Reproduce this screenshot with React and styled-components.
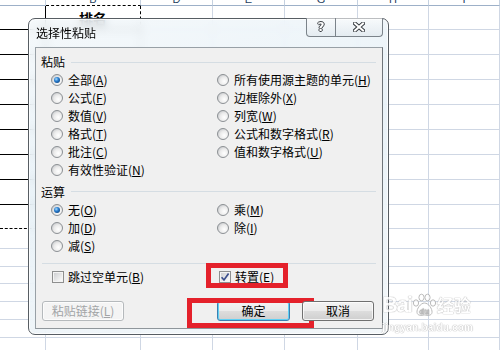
import styled, { createGlobalStyle } from "styled-components";

const GlobalStyle = createGlobalStyle`
  html, body { margin: 0; padding: 0; background: #fff; }
  body { font-family: "Noto Sans CJK SC", "Liberation Sans", sans-serif; }
`;

const GRID = "#cfd7e4";
const colWidths = [46, 95, 72, 72, 73, 71, 71];
const headers = ["", "B", "D", "E", "G", "H", "I"];
const rowHeights = [24, 25, 25, 25, 25, 25, 25, 25, 24, 20, 18, 17, 18, 18, 18, 18];

const pasteOptions = [
  { label: "全部", key: "A", checked: true },
  { label: "所有使用源主题的单元", key: "H" },
  { label: "公式", key: "F" },
  { label: "边框除外", key: "X" },
  { label: "数值", key: "V" },
  { label: "列宽", key: "W" },
  { label: "格式", key: "T" },
  { label: "公式和数字格式", key: "R" },
  { label: "批注", key: "C" },
  { label: "值和数字格式", key: "U" },
  { label: "有效性验证", key: "N" },
];

const opOptions = [
  { label: "无", key: "O", checked: true },
  { label: "乘", key: "M" },
  { label: "加", key: "D" },
  { label: "除", key: "I" },
  { label: "减", key: "S" },
];

const Page = styled.div`
  position: relative;
  width: 500px;
  height: 350px;
  overflow: hidden;
  background: #fff;
`;

const Sheet = styled.div`
  display: flex;
  flex-direction: column;
`;

const Row = styled.div`
  display: flex;
  flex: none;
  height: ${(p) => p.$h}px;
`;

const HeaderCell = styled.div`
  box-sizing: border-box;
  flex: none;
  width: ${(p) => p.$w}px;
  height: 100%;
  overflow: hidden;
  display: flex;
  align-items: flex-end;
  justify-content: center;
  border-right: 1px solid #c5d1e0;
  border-bottom: 1px ${(p) => p.$bottom || "solid #9db0c8"};
  font: 11px/11px "Liberation Sans", sans-serif;
  color: #27415f;
`;

const Cell = styled.div`
  box-sizing: border-box;
  flex: none;
  width: ${(p) => p.$w}px;
  height: 100%;
  display: flex;
  align-items: center;
  justify-content: center;
  border-right: 1px ${(p) => p.$right || `solid ${GRID}`};
  border-bottom: 1px ${(p) => p.$bottom || `solid ${GRID}`};
  font: bold 14px "Noto Sans CJK SC", sans-serif;
  color: #000;
`;

const Dialog = styled.div`
  position: absolute;
  left: 28px;
  top: 18px;
  width: 361px;
  height: 317px;
  box-sizing: border-box;
  padding: 0 5px 5px 6px;
  display: flex;
  flex-direction: column;
  border: 1px solid #575d63;
  border-radius: 7px;
  background: linear-gradient(
    165deg,
    rgba(242, 247, 250, 0.8),
    rgba(228, 239, 246, 0.8) 45%,
    rgba(240, 245, 248, 0.84)
  );
  backdrop-filter: blur(4px);
  box-shadow: inset 0 0 0 1px rgba(255, 255, 255, 0.75);
`;

const TitleBar = styled.div`
  flex: none;
  height: 28px;
  display: flex;
  align-items: flex-start;
  justify-content: space-between;
`;

const Title = styled.span`
  margin-left: 1px;
  font-size: 12px;
  line-height: 28px;
  color: #000;
`;

const Captions = styled.div`
  display: flex;
  margin-top: -1px;
  height: 19px;
  box-sizing: border-box;
  border: 1px solid #7b838a;
  border-top: none;
  border-radius: 0 0 4px 4px;
  overflow: hidden;
  background: linear-gradient(rgba(255, 255, 255, 0.6), rgba(222, 230, 236, 0.6));
`;

const CaptionBtn = styled.div`
  width: ${(p) => p.$w}px;
  display: flex;
  align-items: center;
  justify-content: center;
  & + & {
    border-left: 1px solid #7b838a;
  }
`;

const HelpGlyph = styled.span`
  font: bold 12px/12px "DejaVu Sans", sans-serif;
  color: #fff;
  text-shadow: 1px 0 #3a3f44, -1px 0 #3a3f44, 0 1px #3a3f44, 0 -1px #3a3f44;
`;

const Client = styled.div`
  flex: 1;
  box-sizing: border-box;
  display: flex;
  flex-direction: column;
  padding: 5px 6px 7px 5px;
  background: #f0f0f0;
  border: 1px solid;
  border-color: #98a0a6 #6f757a #8f969b #98a0a6;
  font-size: 12px;
  color: #000;
`;

const GroupHeader = styled.div`
  display: flex;
  align-items: center;
  height: ${(p) => p.$h || 18}px;
  margin-top: ${(p) => p.$mt || 0}px;
  flex: none;
  line-height: 18px;
`;

const GroupLine = styled.div`
  flex: 1;
  height: 1px;
  margin-left: 6px;
  background: #d5dde3;
`;

const OptionGrid = styled.div`
  display: grid;
  grid-template-columns: 166px 1fr;
  grid-auto-rows: 18px;
  margin-left: 10px;
`;

const Option = styled.label`
  display: flex;
  align-items: center;
  gap: 5px;
  white-space: nowrap;
  line-height: 18px;
`;

const Separator = styled.div`
  flex: none;
  height: 1px;
  margin: 8px 0 0 1px;
  background: #d5dde3;
`;

const CheckRow = styled.div`
  display: grid;
  grid-template-columns: 167px 1fr;
  height: 18px;
  margin: 4px 0 0 11px;
`;

const CheckItem = styled.label`
  position: relative;
  display: flex;
  align-items: center;
  gap: 4px;
  white-space: nowrap;
  line-height: 18px;
`;

const ButtonRow = styled.div`
  display: flex;
  height: 20px;
  margin-top: 15px;
  padding-left: 1px;
`;

const ButtonSlot = styled.div`
  position: relative;
  margin-left: ${(p) => p.$ml || "0"};
  margin-right: ${(p) => p.$mr || 0}px;
`;

const Button = styled.button`
  box-sizing: border-box;
  display: block;
  width: ${(p) => p.$w}px;
  height: 20px;
  padding: 0;
  margin: 0;
  font: 12px/18px "Noto Sans CJK SC", sans-serif;
  color: ${(p) => (p.disabled ? "#a2a4a6" : "#000")};
  border: 1px solid
    ${(p) => (p.$primary ? "#3c7fb1" : p.disabled ? "#b5b9bc" : "#707070")};
  border-radius: 3px;
  background: ${(p) =>
    p.disabled
      ? "#f4f4f4"
      : "linear-gradient(#f3f3f3 0%, #ebebeb 48%, #dddddd 50%, #cfcfcf 100%)"};
  box-shadow: inset 0 0 0 1px
    ${(p) => (p.$primary ? "#5fd0f4" : "rgba(255,255,255,0.75)")};
`;

const Highlight = styled.div`
  position: absolute;
  left: ${(p) => p.$l}px;
  top: ${(p) => p.$t}px;
  width: ${(p) => p.$w}px;
  height: ${(p) => p.$h}px;
  box-sizing: border-box;
  border: 5px solid #e4212b;
  pointer-events: none;
`;

const Watermark = styled.div`
  position: absolute;
  left: 382px;
  top: 291px;
  display: flex;
  flex-direction: column;
  pointer-events: none;
  color: #fff;
  text-shadow: 0 0 1px #9c9c9c, 0 0 1px #9c9c9c;
  opacity: 0.8;
`;

const MarkTop = styled.div`
  display: flex;
  align-items: center;
  height: 28px;
`;

const MarkBai = styled.span`
  font: bold 22px/28px "Liberation Sans", sans-serif;
  letter-spacing: -1.5px;
`;

const MarkJy = styled.span`
  font: bold 17px/28px "Noto Sans CJK SC", sans-serif;
`;

const MarkUrl = styled.span`
  margin-top: 3px;
  font: bold 10px/12px "Liberation Sans", sans-serif;
  letter-spacing: 0.2px;
`;

const SvgDefs = () => (
  <svg width="0" height="0" style={{ position: "absolute" }}>
    <defs>
      <radialGradient id="radioFill" cx="62%" cy="62%" r="70%">
        <stop offset="0" stopColor="#ffffff" />
        <stop offset="0.55" stopColor="#ebebeb" />
        <stop offset="1" stopColor="#c4c6c9" />
      </radialGradient>
      <radialGradient id="radioDot" cx="38%" cy="35%" r="70%">
        <stop offset="0" stopColor="#a8dcfd" />
        <stop offset="0.5" stopColor="#2b7fd0" />
        <stop offset="1" stopColor="#0e4a8c" />
      </radialGradient>
      <linearGradient id="checkFill" x1="0" y1="0" x2="1" y2="1">
        <stop offset="0" stopColor="#cfd0d2" />
        <stop offset="1" stopColor="#fbfbfb" />
      </linearGradient>
    </defs>
  </svg>
);

const RadioIcon = ({ checked }) => (
  <svg width="12" height="12" viewBox="0 0 12 12">
    <circle cx="6" cy="6" r="5.5" fill="url(#radioFill)" stroke="#8c9094" />
    {checked && <circle cx="6" cy="6" r="3" fill="url(#radioDot)" />}
  </svg>
);

const CheckIcon = ({ checked }) => (
  <svg width="12" height="12" viewBox="0 0 12 12">
    <rect x="0.5" y="0.5" width="11" height="11" fill="#f4f4f4" stroke="#8e8f8f" />
    <rect x="2" y="2" width="8" height="8" fill="url(#checkFill)" />
    {checked && (
      <path d="M2.6 6.2 L5 9 L9.6 2.6" fill="none" stroke="#3b4f8c" strokeWidth="1.7" />
    )}
  </svg>
);

const CloseIcon = () => (
  <svg width="12" height="10" viewBox="0 0 12 10">
    <path d="M2 1.5 L10 8.5 M10 1.5 L2 8.5" stroke="#3a3f44" strokeWidth="4" strokeLinecap="square" />
    <path d="M2 1.5 L10 8.5 M10 1.5 L2 8.5" stroke="#fff" strokeWidth="2" strokeLinecap="square" />
  </svg>
);

const PawIcon = () => (
  <svg width="25" height="24" viewBox="0 0 25 24">
    <g fill="#fff" stroke="#a9a9a9" strokeWidth="1">
      <ellipse cx="4" cy="10" rx="2.6" ry="3.2" />
      <ellipse cx="9.5" cy="4.5" rx="2.6" ry="3.3" />
      <ellipse cx="15.5" cy="4.5" rx="2.6" ry="3.3" />
      <ellipse cx="21" cy="10" rx="2.6" ry="3.2" />
      <path d="M12.5 10 C8.5 10 4.5 16 5 19.5 C5.5 23 9.5 22.5 12.5 22 C15.5 22.5 19.5 23 20 19.5 C20.5 16 16.5 10 12.5 10 Z" />
    </g>
    <text x="12.5" y="20.5" textAnchor="middle" fontSize="8" fontWeight="bold" fontFamily="Liberation Sans" fill="#fff" stroke="#a9a9a9" strokeWidth="0.4">
      du
    </text>
  </svg>
);

const Label = ({ label, k }) => (
  <span>
    {label}(<u>{k}</u>)
  </span>
);

const cellBorders = (r, c) => {
  if (r <= 9 && c === 0) {
    return { right: "solid #000", bottom: r < 9 ? "solid #000" : "dashed #000" };
  }
  if (r <= 9 && c === 1) {
    return { right: "dashed #000", bottom: r < 9 ? "solid #000" : "dashed #000" };
  }
  return {};
};

const renderOptions = (opts, rows) => {
  const cells = [];
  for (let i = 0; i < rows * 2; i++) {
    const o = opts[i];
    cells.push(
      o ? (
        <Option key={i}>
          <RadioIcon checked={o.checked} />
          <Label label={o.label} k={o.key} />
        </Option>
      ) : (
        <span key={i} />
      )
    );
  }
  return cells;
};

export default function App() {
  return (
    <Page>
      <GlobalStyle />
      <SvgDefs />
      <Sheet>
        <Row $h={6}>
          {colWidths.map((w, c) => (
            <HeaderCell key={c} $w={w} $bottom={c === 1 ? "dashed #000" : undefined}>
              {headers[c]}
            </HeaderCell>
          ))}
        </Row>
        {rowHeights.map((h, i) => {
          const r = i + 1;
          return (
            <Row key={r} $h={h}>
              {colWidths.map((w, c) => {
                const b = cellBorders(r, c);
                return (
                  <Cell key={c} $w={w} $right={b.right} $bottom={b.bottom}>
                    {r === 1 && c === 1 ? "排名" : null}
                  </Cell>
                );
              })}
            </Row>
          );
        })}
      </Sheet>

      <Dialog>
        <TitleBar>
          <Title>选择性粘贴</Title>
          <Captions>
            <CaptionBtn $w={28}>
              <HelpGlyph>?</HelpGlyph>
            </CaptionBtn>
            <CaptionBtn $w={46}>
              <CloseIcon />
            </CaptionBtn>
          </Captions>
        </TitleBar>
        <Client>
          <GroupHeader>
            粘贴
            <GroupLine />
          </GroupHeader>
          <OptionGrid>{renderOptions(pasteOptions, 6)}</OptionGrid>

          <GroupHeader $mt={3} $h={19}>
            运算
            <GroupLine />
          </GroupHeader>
          <OptionGrid>{renderOptions(opOptions, 3)}</OptionGrid>

          <Separator />

          <CheckRow>
            <CheckItem>
              <CheckIcon />
              <Label label="跳过空单元" k="B" />
            </CheckItem>
            <CheckItem>
              <CheckIcon checked />
              <Label label="转置" k="E" />
              <Highlight $l={-13} $t={-5} $w={82} $h={25} />
            </CheckItem>
          </CheckRow>

          <ButtonRow>
            <ButtonSlot>
              <Button $w={82} disabled>
                粘贴链接(<u>L</u>)
              </Button>
            </ButtonSlot>
            <ButtonSlot $ml="auto">
              <Button $w={73} $primary>
                确定
              </Button>
              <Highlight $l={-30} $t={-3} $w={127} $h={30} />
            </ButtonSlot>
            <ButtonSlot $ml="12px" $mr={2}>
              <Button $w={72}>取消</Button>
            </ButtonSlot>
          </ButtonRow>
        </Client>
      </Dialog>

      <Watermark>
        <MarkTop>
          <MarkBai>Bai</MarkBai>
          <PawIcon />
          <MarkJy>经验</MarkJy>
        </MarkTop>
        <MarkUrl>jingyan.baidu.com</MarkUrl>
      </Watermark>
    </Page>
  );
}
